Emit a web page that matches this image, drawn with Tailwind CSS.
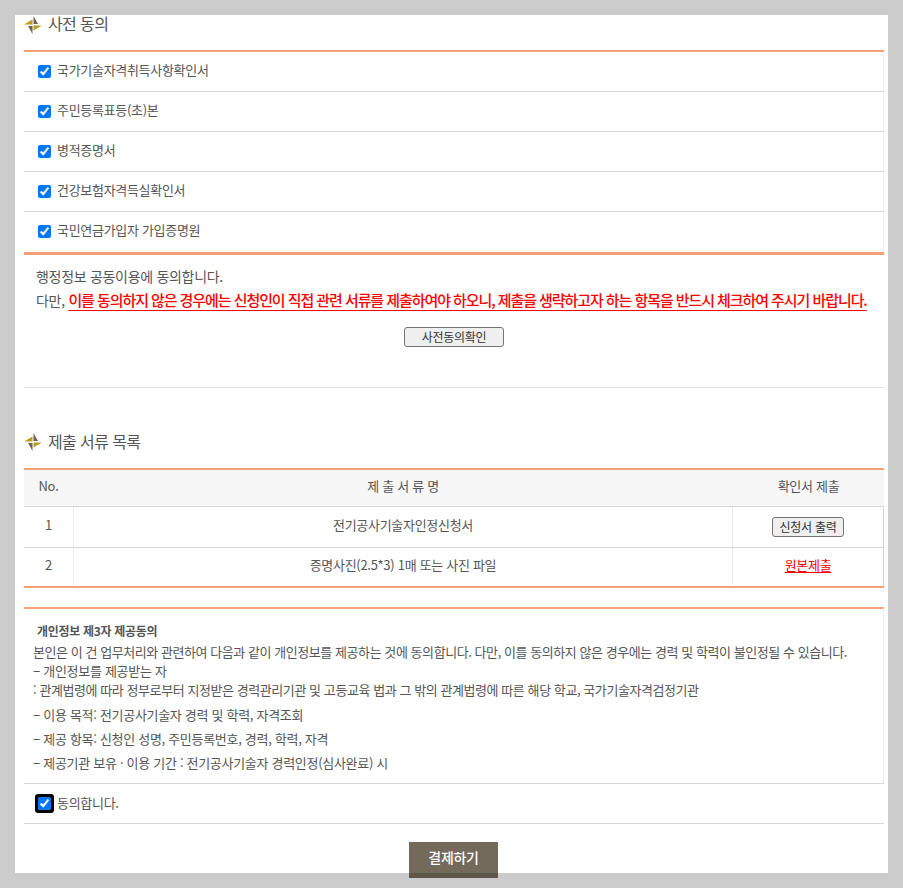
<!DOCTYPE html>
<html lang="ko">
<head>
    <meta charset="UTF-8">
    <meta name="viewport" content="width=device-width, initial-scale=1.0">
    <title>사전 동의</title>
    <script src="https://cdn.jsdelivr.net/npm/@tailwindcss/browser@4"></script>
</head>
<body class="bg-[#cccccc] h-[888px] overflow-hidden pt-[15px] font-['Noto_Sans_CJK_KR','Noto_Sans',sans-serif] text-[13px] text-[#555555] tracking-[-0.3px]">
    <div class="ml-[15px] w-[873px] h-[858px] bg-white pl-[9px] pr-[4px]">
        <!-- 사전 동의 -->
        <h3 class="h-[35px] flex items-center gap-[6px] text-[16px] font-normal leading-none pb-[16px] pt-[1px] tracking-[-0.6px]">
            <svg width="18" height="18" viewBox="0 0 18 18"><polygon points="0,8.5 8.5,8.5 8.5,3.5" fill="#b8a019"/><polygon points="9.5,9.5 18,9.5 9.5,14.5" fill="#b8a019"/><polygon points="9.5,0 9.5,8 14,8" fill="#6f6557"/><polygon points="8.5,18 8.5,10 4,10" fill="#6f6557"/></svg>
            <span class="-mt-[5px]">사전 동의</span>
        </h3>
        <div class="border-t-2 border-b-[3px] border-[#f4a07a]">
            <div class="border-r border-[#eeeeee]">
                <label class="h-[40px] flex items-center gap-[6px] pl-[14px] border-b border-[#d9d5d5]"><input type="checkbox" checked><span class="-mt-[4px]">국가기술자격취득사항확인서</span></label>
                <label class="h-[40px] flex items-center gap-[6px] pl-[14px] border-b border-[#d9d5d5]"><input type="checkbox" checked><span class="-mt-[4px]">주민등록표등(초)본</span></label>
                <label class="h-[40px] flex items-center gap-[6px] pl-[14px] border-b border-[#d9d5d5]"><input type="checkbox" checked><span class="-mt-[4px]">병적증명서</span></label>
                <label class="h-[40px] flex items-center gap-[6px] pl-[14px] border-b border-[#d9d5d5]"><input type="checkbox" checked><span class="-mt-[4px]">건강보험자격득실확인서</span></label>
                <label class="h-[40px] flex items-center gap-[6px] pl-[14px] pb-[1px]"><input type="checkbox" checked><span class="-mt-[4px]">국민연금가입자 가입증명원</span></label>
            </div>
        </div>
        <div class="h-[133px] border-b border-[#e2e2e2] pt-[10px]">
            <p class="pl-[12px] h-[22px] leading-[22px] text-[14px]">행정정보 공동이용에 동의합니다.</p>
            <p class="pl-[12px] h-[26px] leading-[26px] text-[14px]">다만, <span class="text-[#ff0000] text-[15px] font-medium tracking-[-1.07px] underline decoration-1 underline-offset-[4px]">이를 동의하지 않은 경우에는 신청인이 직접 관련 서류를 제출하여야 하오니, 제출을 생략하고자 하는 항목을 반드시 체크하여 주시기 바랍니다.</span></p>
            <div class="flex justify-center mt-[14px]">
                <button class="w-[100px] h-[20px] bg-[#efefef] border border-[#767676] rounded-[3px] text-[12px] leading-none text-[#333333]">사전동의확인</button>
            </div>
        </div>

        <!-- 제출 서류 목록 -->
        <h3 class="h-[80px] flex items-center gap-[6px] text-[16px] font-normal leading-none pt-[27px] tracking-[-0.6px]">
            <svg width="18" height="18" viewBox="0 0 18 18"><polygon points="0,8.5 8.5,8.5 8.5,3.5" fill="#b8a019"/><polygon points="9.5,9.5 18,9.5 9.5,14.5" fill="#b8a019"/><polygon points="9.5,0 9.5,8 14,8" fill="#6f6557"/><polygon points="8.5,18 8.5,10 4,10" fill="#6f6557"/></svg>
            <span class="-mt-[2px]">제출 서류 목록</span>
        </h3>
        <div class="border-t-2 border-b-[2px] border-[#f4a07a]">
            <div class="grid grid-cols-[49px_1fr_151px] h-[37px] bg-[#f7f7f7] border-b border-[#d9d5d5] items-center text-center pb-[5px]">
                <div>No.</div><div>제 출 서 류 명</div><div>확인서 제출</div>
            </div>
            <div class="grid grid-cols-[50px_1fr_151px] h-[41px] border-b border-r border-[#d9d5d5] text-center items-stretch">
                <div class="flex items-center justify-center border-r border-[#ebebeb] pb-[5px]">1</div>
                <div class="flex items-center justify-center pb-[5px]">전기공사기술자인정신청서</div>
                <div class="flex items-center justify-center border-l border-[#ebebeb]"><button class="w-[72px] h-[20px] bg-[#efefef] border border-[#767676] rounded-[3px] text-[12px] leading-none text-[#333333]">신청서 출력</button></div>
            </div>
            <div class="grid grid-cols-[50px_1fr_151px] h-[38px] border-r border-[#d9d5d5] text-center items-stretch">
                <div class="flex items-center justify-center border-r border-[#ebebeb] pb-[5px]">2</div>
                <div class="flex items-center justify-center pb-[5px]">증명사진(2.5*3) 1매 또는 사진 파일</div>
                <div class="flex items-center justify-center border-l border-[#ebebeb] pb-[4px]"><a href="#" class="text-[#ff0000] underline underline-offset-2">원본제출</a></div>
            </div>
        </div>

        <!-- 개인정보 제3자 제공동의 -->
        <div class="mt-[19px] border-t-2 border-r border-t-[#f4a07a] border-r-[#eeeeee] pt-[12px] pl-[9px] h-[176px]">
            <p class="pl-[4px] h-[19px] leading-[19px] font-bold text-[12px]">개인정보 제3자 제공동의</p>
            <p class="h-[18px] leading-[18px] mt-[3px] tracking-[-0.44px]">본인은 이 건 업무처리와 관련하여 다음과 같이 개인정보를 제공하는 것에 동의합니다. 다만, 이를 동의하지 않은 경우에는 경력 및 학력이 불인정될 수 있습니다.</p>
            <p class="h-[18px] leading-[18px] mt-[1px]">− 개인정보를 제공받는 자</p>
            <p class="h-[20px] leading-[20px] tracking-[-0.43px]">: 관계법령에 따라 정부로부터 지정받은 경력관리기관 및 고등교육 법과 그 밖의 관계법령에 따른 해당 학교, 국가기술자격검정기관</p>
            <p class="h-[24px] leading-[24px] mt-[3px]">− 이용 목적: 전기공사기술자 경력 및 학력, 자격조회</p>
            <p class="h-[24px] leading-[24px]">− 제공 항목: 신청인 성명, 주민등록번호, 경력, 학력, 자격</p>
            <p class="h-[24px] leading-[24px]">− 제공기관 보유 · 이용 기간 : 전기공사기술자 경력인정(심사완료) 시</p>
        </div>
        <label class="h-[41px] flex items-center gap-[6px] pl-[14px] border-t border-b border-[#d9d5d5]">
            <span class="flex bg-black rounded-[3px] p-[3px] -m-[3px]"><input type="checkbox" checked></span>
            <span class="-mt-[2px]">동의합니다.</span>
        </label>

        <div class="flex justify-center mt-[18px]">
            <button class="w-[89px] h-[36px] bg-[#746a5c] border-b-[5px] border-[#5f574c] text-white text-[14px] font-medium mr-[1px]">결제하기</button>
        </div>
    </div>
</body>
</html>
